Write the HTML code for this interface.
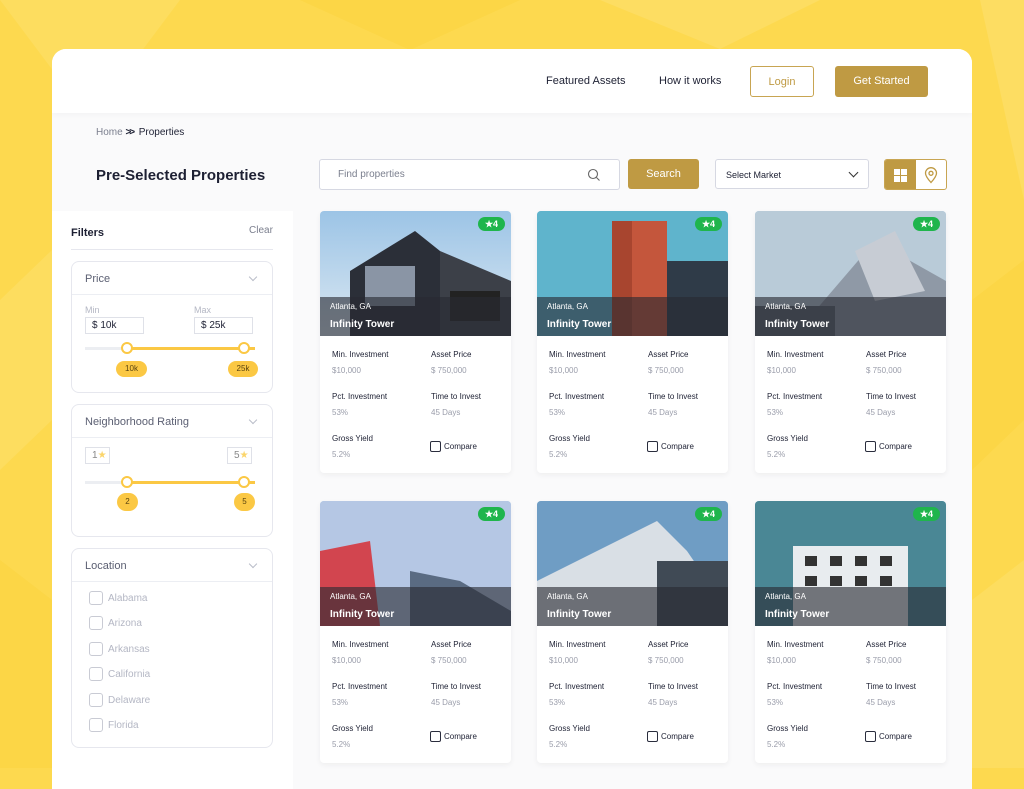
<!DOCTYPE html>
<html><head><meta charset="utf-8"><style>
*{margin:0;padding:0;box-sizing:border-box}
body{width:1024px;height:768px;overflow:hidden;position:relative;font-family:"Liberation Sans",sans-serif;background:#fdd94f;color:#1d2033}
.a{position:absolute}
.frame{left:52px;top:49px;width:920px;height:740px;background:#fafafb;border-radius:14px 14px 0 0;overflow:hidden}
.hdr{left:0;top:0;width:920px;height:64px;background:#fff;box-shadow:0 2px 6px rgba(0,0,0,.03)}
.nav{font-size:11px;color:#1d2033}
.btn{border-radius:3px;font-size:11px;text-align:center;line-height:30px}
.side{left:0;top:162px;width:241px;height:600px;background:#fff}
.box{left:19px;width:202px;border:1px solid #e6e7ee;border-radius:8px;background:#fff}
.bh{height:33px;border-bottom:1px solid #eceef3;font-size:11px;color:#5b5f72;padding:11px 0 0 13px;position:relative}
.chev{position:absolute;right:16px;top:12px;width:6px;height:6px;border-right:1px solid #b9bcc8;border-bottom:1px solid #b9bcc8;transform:rotate(45deg)}
.lab{font-size:9px;color:#b4b7c4}
.inp{border:1px solid #dfe1e8;font-size:10px;padding:2px 6px;height:17px;background:#fff}
.track{height:3px;background:#eceef2}
.fill{height:3px;background:#fbc844}
.knob{width:12px;height:12px;border:2px solid #fbc844;background:#fff;border-radius:50%}
.tip{background:#fbc844;border-radius:9px;font-size:8px;text-align:center;color:#5a4410;height:16px;line-height:16px}
.cb{width:14px;height:14px;border:1px solid #c9cbd4;border-radius:3px}
.loc{font-size:10px;color:#b4b7c4}
.card{width:191px;height:262px;background:#fff;border-radius:4px;overflow:hidden;box-shadow:0 2px 6px rgba(0,0,0,.05)}
.img{left:0;top:0;width:191px;height:125px;overflow:hidden}
.band{left:0;top:86px;width:191px;height:39px;background:rgba(40,42,50,.62);color:#fff}
.badge{right:6px;top:6px;width:27px;height:14px;background:#1fb54c;border-radius:7px;color:#fff;font-size:9px;font-weight:bold;text-align:center;line-height:14px}
.k{font-size:8px;color:#1d2033}
.v{font-size:8px;color:#9a9daa}
</style></head><body>
<svg class="a" style="left:0;top:0" width="1024" height="768">
<polygon points="0,0 180,0 90,120" fill="#fddd5f"/><polygon points="300,0 520,0 410,50" fill="#fcd646"/>
<polygon points="600,0 820,0 720,49" fill="#fddd62"/><polygon points="980,0 1024,0 1024,200" fill="#fddd62"/>
<polygon points="0,300 52,250 52,420 0,470" fill="#fddd5f"/><polygon points="972,300 1024,260 1024,420 972,470" fill="#fcd646"/>
<polygon points="0,560 52,600 52,768 0,768" fill="#fcd646"/><polygon points="972,600 1024,560 1024,768 972,768" fill="#fddd5f"/>
</svg>
<div class="a frame">
 <div class="a hdr">
  <div class="a nav" style="left:494px;top:26px">Featured Assets</div>
  <div class="a nav" style="left:607px;top:26px">How it works</div>
  <div class="a btn" style="left:698px;top:17px;width:64px;height:31px;border:1px solid #c8a552;color:#bf9a43">Login</div>
  <div class="a btn" style="left:783px;top:17px;width:93px;height:31px;background:#bf9a43;color:#fff">Get Started</div>
 </div>
 <div class="a" style="left:44px;top:78px;font-size:10px;color:#7b7f8e">Home <b style="color:#1d2033;letter-spacing:-2px">&gt;&gt;</b>&nbsp; <span style="color:#1d2033">Properties</span></div>
 <div class="a" style="left:44px;top:118px;font-size:15px;font-weight:bold">Pre-Selected Properties</div>
 <div class="a" style="left:267px;top:110px;width:301px;height:31px;border:1px solid #d6d8e2;border-radius:3px;background:#fff;font-size:10px;color:#7b7f8e;padding:9px 18px">Find properties
  <svg class="a" style="right:18px;top:8px" width="14" height="14"><circle cx="6" cy="6" r="4.5" fill="none" stroke="#666" stroke-width="1.1"/><line x1="9.5" y1="9.5" x2="12.5" y2="12.5" stroke="#666" stroke-width="1.1"/></svg></div>
 <div class="a btn" style="left:576px;top:110px;width:71px;height:30px;background:#bf9a43;color:#fff">Search</div>
 <div class="a" style="left:663px;top:110px;width:154px;height:30px;border:1px solid #d6d8e2;border-radius:3px;background:#fff;font-size:9px;padding:10px 10px">Select Market
  <div class="a" style="right:11px;top:9px;width:7px;height:7px;border-right:1.3px solid #333;border-bottom:1.3px solid #333;transform:rotate(45deg)"></div></div>
 <div class="a" style="left:832px;top:110px;width:63px;height:31px;border:1px solid #c8a552;border-radius:3px;background:#fff;overflow:hidden">
  <div class="a" style="left:0;top:0;width:31px;height:31px;background:#bf9a43"></div>
  <svg class="a" style="left:9px;top:9px" width="13" height="13"><rect x="0" y="0" width="6" height="6" fill="#fff"/><rect x="7" y="0" width="6" height="6" fill="#fff"/><rect x="0" y="7" width="6" height="6" fill="#fff"/><rect x="7" y="7" width="6" height="6" fill="#fff"/></svg>
  <svg class="a" style="left:39px;top:7px" width="14" height="17"><path d="M7 15.5C3 11 1.5 8.5 1.5 6.2A5.5 5.5 0 0 1 12.5 6.2C12.5 8.5 11 11 7 15.5Z" fill="none" stroke="#bf9a43" stroke-width="1.3"/><circle cx="7" cy="6.3" r="2" fill="none" stroke="#bf9a43" stroke-width="1.3"/></svg>
 </div>

 <div class="a side">
  <div class="a" style="left:19px;top:16px;font-size:11px;font-weight:bold">Filters</div>
  <div class="a" style="left:197px;top:14px;font-size:10px;color:#7b7f8e">Clear</div>
  <div class="a" style="left:19px;top:38px;width:202px;height:1px;background:#e6e7ee"></div>
  <div class="a box" style="top:50px;height:132px"><div class="bh">Price<div class="chev"></div></div>
   <div class="a lab" style="left:13px;top:43px">Min</div><div class="a lab" style="left:122px;top:43px">Max</div>
   <div class="a inp" style="left:13px;top:55px;width:59px">$ 10k</div><div class="a inp" style="left:122px;top:55px;width:59px">$ 25k</div>
   <div class="a track" style="left:13px;top:85px;width:170px"></div><div class="a fill" style="left:55px;top:85px;width:128px"></div>
   <div class="a knob" style="left:49px;top:80px"></div><div class="a knob" style="left:166px;top:80px"></div>
   <div class="a tip" style="left:44px;top:99px;width:31px">10k</div><div class="a tip" style="left:156px;top:99px;width:30px">25k</div>
  </div>
  <div class="a box" style="top:193px;height:133px"><div class="bh">Neighborhood Rating<div class="chev"></div></div>
   <div class="a inp" style="left:13px;top:42px;width:25px;color:#888">1<span style="color:#fbd56b">★</span></div>
   <div class="a inp" style="left:155px;top:42px;width:25px;color:#888">5<span style="color:#fbd56b">★</span></div>
   <div class="a track" style="left:13px;top:76px;width:170px"></div><div class="a fill" style="left:55px;top:76px;width:128px"></div>
   <div class="a knob" style="left:49px;top:71px"></div><div class="a knob" style="left:166px;top:71px"></div>
   <div class="a tip" style="left:45px;top:88px;width:21px;height:18px;line-height:18px">2</div><div class="a tip" style="left:162px;top:88px;width:21px;height:18px;line-height:18px">5</div>
  </div>
  <div class="a box" style="top:337px;height:200px"><div class="bh">Location<div class="chev"></div></div>
   <div class="a cb" style="left:17px;top:42px"></div><div class="a loc" style="left:36px;top:44px">Alabama</div>
   <div class="a cb" style="left:17px;top:67px"></div><div class="a loc" style="left:36px;top:69px">Arizona</div>
   <div class="a cb" style="left:17px;top:93px"></div><div class="a loc" style="left:36px;top:95px">Arkansas</div>
   <div class="a cb" style="left:17px;top:118px"></div><div class="a loc" style="left:36px;top:120px">California</div>
   <div class="a cb" style="left:17px;top:144px"></div><div class="a loc" style="left:36px;top:146px">Delaware</div>
   <div class="a cb" style="left:17px;top:169px"></div><div class="a loc" style="left:36px;top:171px">Florida</div>
  </div>
 </div>

 <div class="a card" style="left:268px;top:162px">
  <div class="a img" style="background:linear-gradient(#9cc4e6,#dbe8f2)"><svg width="191" height="125"><polygon points="30,60 95,20 120,40 120,125 30,125" fill="#2b2f38"/><polygon points="120,40 191,70 191,125 120,125" fill="#3c4048"/><rect x="45" y="55" width="50" height="40" fill="#8a95a5"/><rect x="130" y="80" width="50" height="30" fill="#222"/></svg></div>
  <div class="a band"><div class="a" style="left:10px;top:5px;font-size:8px">Atlanta, GA</div><div class="a" style="left:10px;top:22px;font-size:10px;font-weight:bold">Infinity Tower</div></div>
  <div class="a badge">★4</div>
  <div class="a k" style="left:12px;top:139px">Min. Investment</div><div class="a k" style="left:111px;top:139px">Asset Price</div>
  <div class="a v" style="left:12px;top:155px">$10,000</div><div class="a v" style="left:111px;top:155px">$ 750,000</div>
  <div class="a k" style="left:12px;top:181px">Pct. Investment</div><div class="a k" style="left:111px;top:181px">Time to Invest</div>
  <div class="a v" style="left:12px;top:197px">53%</div><div class="a v" style="left:111px;top:197px">45 Days</div>
  <div class="a k" style="left:12px;top:223px">Gross Yield</div><div class="a v" style="left:12px;top:239px">5.2%</div>
  <div class="a" style="left:110px;top:230px;width:11px;height:11px;border:1.3px solid #2a2d3d;border-radius:2px"></div><div class="a k" style="left:124px;top:231px">Compare</div>
 </div>
</div>
<script>
var c=document.querySelector('.card'),imgs=[
'<svg width="191" height="125"><rect width="191" height="125" fill="#5fb4cc"/><rect x="75" y="10" width="55" height="115" fill="#c4563c"/><rect x="75" y="10" width="20" height="115" fill="#a8452f"/><rect x="130" y="50" width="61" height="75" fill="#2f3b48"/></svg>',
'<svg width="191" height="125"><rect width="191" height="125" fill="#b9cbd8"/><polygon points="60,100 120,30 191,70 191,125 60,125" fill="#8f99a6"/><polygon points="100,40 140,20 170,80 120,90" fill="#c7ccd4"/><rect x="0" y="95" width="80" height="30" fill="#5a6470"/></svg>',
'<svg width="191" height="125"><rect width="191" height="125" fill="#b5c7e4"/><polygon points="0,50 50,40 60,125 0,125" fill="#d2454f"/><polygon points="90,70 140,80 191,110 191,125 90,125" fill="#5a6b82"/></svg>',
'<svg width="191" height="125"><rect width="191" height="125" fill="#6f9dc4"/><polygon points="0,80 120,20 150,50 191,110 191,125 0,125" fill="#d9dfe5"/><rect x="120" y="60" width="71" height="65" fill="#404a55"/></svg>',
'<svg width="191" height="125"><rect width="191" height="125" fill="#4a8795"/><rect x="38" y="45" width="115" height="80" fill="#e8ecef"/><g fill="#333"><rect x="50" y="55" width="12" height="10"/><rect x="75" y="55" width="12" height="10"/><rect x="100" y="55" width="12" height="10"/><rect x="125" y="55" width="12" height="10"/><rect x="50" y="75" width="12" height="10"/><rect x="75" y="75" width="12" height="10"/><rect x="100" y="75" width="12" height="10"/><rect x="125" y="75" width="12" height="10"/></g></svg>'];
var pos=[[485,162],[703,162],[268,452],[485,452],[703,452]];
pos.forEach(function(p,i){var n=c.cloneNode(true);n.style.left=p[0]+'px';n.style.top=p[1]+'px';n.querySelector('.img').innerHTML=imgs[i];c.parentNode.appendChild(n);});
</script>
</body></html>
